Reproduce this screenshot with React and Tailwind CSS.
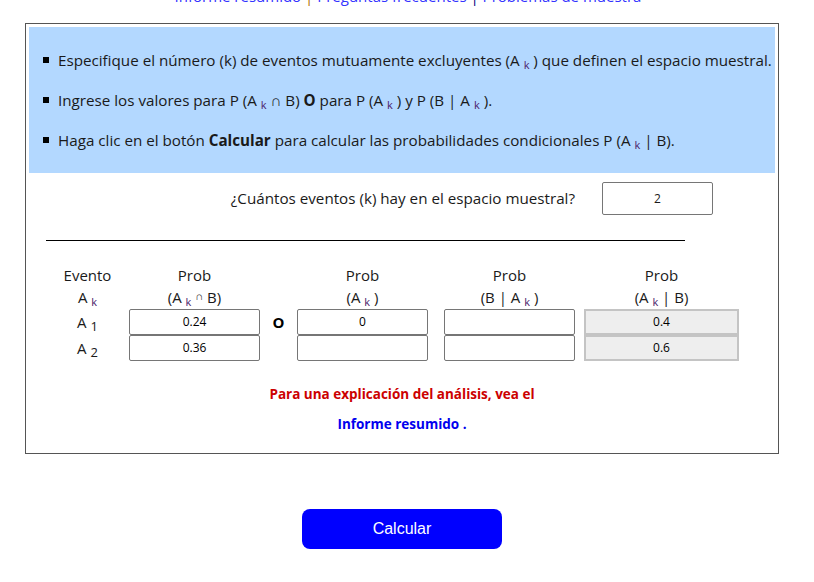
import React from "react";

const F = { fontFamily: '"Open Sans", "Noto Sans", sans-serif' };

function K() {
  return <span className="relative top-[3px] text-[11px] text-[#4a1a6a]">k</span>;
}

function Bullet({ children }) {
  return (
    <li className="flex items-center h-5">
      <span className="w-[6px] h-[6px] bg-black ml-[14px] mr-[9px] shrink-0" />
      <span>{children}</span>
    </li>
  );
}

function Cell({ value = "", gray = false }) {
  return (
    <div
      className={
        "h-[26px] flex items-center justify-center text-[12px] text-black " +
        (gray
          ? "bg-[#eeeeee] border-2 border-[#c4c4c4]"
          : "bg-white border border-[#767676] rounded-[2px]")
      }
    >
      {value}
    </div>
  );
}

export default function App() {
  return (
    <div className="w-[814px] h-[582px] bg-white overflow-hidden text-[#1a1a1a]" style={F}>
      <div className="-mt-[14px] h-5 leading-5 text-[15px] text-center text-[#3333ff] pl-[2px]">
        Informe resumido <span className="text-[#b07000]">|</span> Preguntas frecuentes{" "}
        <span className="text-[#000080]">|</span> Problemas de muestra
      </div>

      <div className="mt-[17px] ml-[25px] w-[754px] border border-[#555555] p-[3px] pb-0">
        <div className="bg-[#b3d8ff] h-[146px] pt-[23px] text-[15.2px]">
          <ul className="flex flex-col gap-5">
            <Bullet>
              Especifique el número (k) de eventos mutuamente excluyentes (A <K /> ) que definen el espacio muestral.
            </Bullet>
            <Bullet>
              Ingrese los valores para P (A <K /> ∩ B) <b>O</b> para P (A <K /> ) y P (B | A <K /> ).
            </Bullet>
            <Bullet>
              Haga clic en el botón <b>Calcular</b> para calcular las probabilidades condicionales P (A <K /> | B).
            </Bullet>
          </ul>
        </div>

        <div className="mt-[9px] flex items-center text-[15.2px]">
          <div className="w-[546px] text-right">¿Cuántos eventos (k) hay en el espacio muestral?</div>
          <div className="ml-[27px] w-[111px] h-[33px] border border-[#767676] rounded-[2px] flex items-center justify-center text-[12px]">
            2
          </div>
        </div>

        <div className="mt-[25px] ml-[17px] w-[639px] h-px bg-black" />

        <div className="mt-[24px] ml-[17px] grid grid-cols-[83px_131px_37px_131px_16px_131px_9px_155px] text-[15px] text-center">
          <div className="h-[22px] leading-5">Evento</div>
          <div className="leading-5">Prob</div>
          <div />
          <div className="leading-5">Prob</div>
          <div />
          <div className="leading-5">Prob</div>
          <div />
          <div className="leading-5">Prob</div>

          <div className="h-[21px] leading-5">A <K /></div>
          <div className="leading-5">(A <K /> <span className="relative -top-[3px] text-[11px]">∩</span> B)</div>
          <div />
          <div className="leading-5">(A <K /> )</div>
          <div />
          <div className="leading-5">(B | A <K /> )</div>
          <div />
          <div className="leading-5">(A <K /> | B)</div>

          <div className="h-[26px] leading-[26px]">A <span className="relative top-[3px] text-[13px]">1</span></div>
          <Cell value="0.24" />
          <div className="flex items-center justify-center font-bold text-[15px] text-black">O</div>
          <Cell value="0" />
          <div />
          <Cell />
          <div />
          <Cell value="0.4" gray />

          <div className="h-[26px] leading-[26px]">A <span className="relative top-[3px] text-[13px]">2</span></div>
          <Cell value="0.36" />
          <div />
          <Cell />
          <div />
          <Cell />
          <div />
          <Cell value="0.6" gray />
        </div>

        <div className="mt-[23px] text-center font-bold text-[13.5px] leading-5 text-[#cc0000]">
          Para una explicación del análisis, vea el
        </div>
        <div className="mt-[10px] text-center font-bold text-[13.5px] leading-5 text-[#0000ee]">
          Informe resumido .
        </div>
        <div className="h-[19px]" />
      </div>

      <div className="mt-[55px] ml-[302px]">
        <button
          className="w-[200px] h-[40px] rounded-lg bg-[#0000ff] text-white text-[16px]"
          style={{ fontFamily: '"Liberation Sans", Arial, sans-serif' }}
        >
          Calcular
        </button>
      </div>
    </div>
  );
}
